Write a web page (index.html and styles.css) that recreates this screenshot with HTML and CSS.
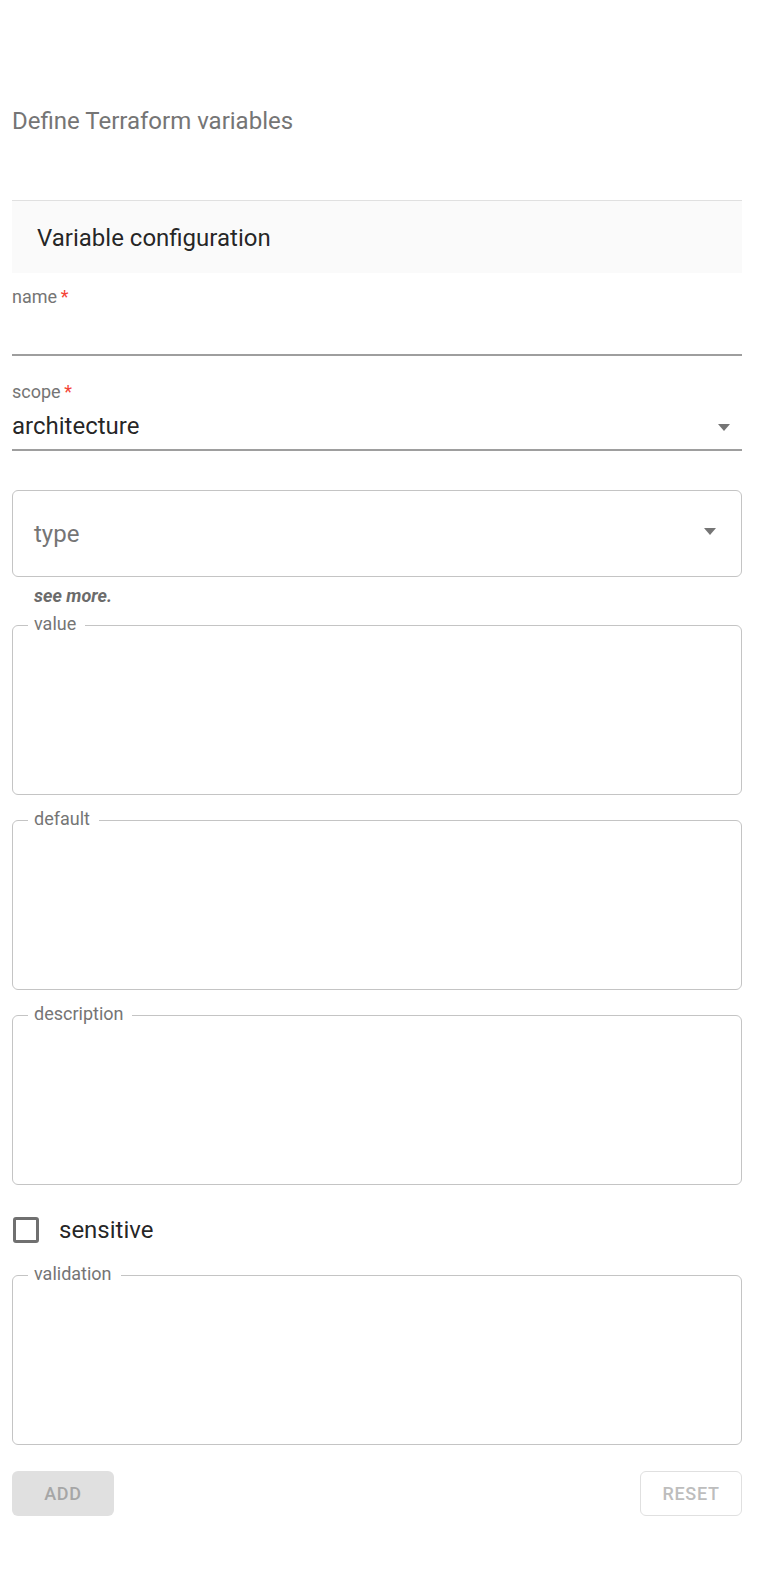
FILE: index.html
```html
<!DOCTYPE html>
<html lang="en">
<head>
<meta charset="utf-8">
<title>Define Terraform variables</title>
<link rel="stylesheet" href="styles.css">
</head>
<body>
<div class="page">
  <h2 class="title">Define Terraform variables</h2>
  <div class="section-head">Variable configuration</div>

  <div class="field">
    <label class="field-label">name&thinsp;<span class="req">*</span></label>
    <div class="field-input"></div>
  </div>

  <div class="field field-scope">
    <label class="field-label">scope&thinsp;<span class="req">*</span></label>
    <div class="field-input select">
      <span class="value-text">architecture</span>
      <svg class="arrow" width="12" height="7" viewBox="0 0 12 7"><polygon points="0,0 12,0 6,7"/></svg>
    </div>
  </div>

  <div class="outlined-select">
    <span class="placeholder">type</span>
    <svg class="arrow" width="12" height="7" viewBox="0 0 12 7"><polygon points="0,0 12,0 6,7"/></svg>
  </div>
  <div class="helper">see more.</div>

  <fieldset class="area first"><legend>value</legend><div class="area-body"></div></fieldset>
  <fieldset class="area"><legend>default</legend><div class="area-body"></div></fieldset>
  <fieldset class="area"><legend>description</legend><div class="area-body"></div></fieldset>

  <label class="check-row"><span class="check"></span><span class="check-text">sensitive</span></label>

  <fieldset class="area validation"><legend>validation</legend><div class="area-body"></div></fieldset>

  <div class="actions">
    <button class="btn btn-add" type="button">ADD</button>
    <button class="btn btn-reset" type="button">RESET</button>
  </div>
</div>
</body>
</html>
```

FILE: styles.css
```css
* { box-sizing: border-box; }

html, body {
  margin: 0;
  background: #ffffff;
}

body {
  font-family: Roboto, "Liberation Sans", Arial, sans-serif;
  color: rgba(0, 0, 0, 0.87);
}

.page {
  padding: 105px 22px 0 12px;
  min-height: 1584px;
}

.title {
  margin: 0;
  font-size: 24px;
  line-height: 32px;
  font-weight: 400;
  color: #757575;
}

.section-head {
  margin-top: 63px;
  border-top: 1px solid #e0e0e0;
  background: #fafafa;
  padding: 21px 0 19px 25px;
  font-size: 24px;
  line-height: 32px;
  color: rgba(0, 0, 0, 0.87);
}

.field {
  margin-top: 12px;
}

.field-scope {
  margin-top: 24px;
}

.field-label {
  display: block;
  font-size: 18px;
  line-height: 24px;
  color: #757575;
}

.req {
  color: #f44336;
}

.field-input {
  height: 47px;
  border-bottom: 2px solid #9e9e9e;
  padding: 4px 12px 5px 0;
}

.select {
  display: flex;
  align-items: center;
  justify-content: space-between;
}

.value-text {
  font-size: 24px;
  line-height: 36px;
  color: rgba(0, 0, 0, 0.87);
}

.arrow {
  display: block;
  fill: #757575;
  flex: none;
}

.select .arrow {
  margin-top: 2px;
}

.outlined-select {
  margin-top: 39px;
  height: 87px;
  border: 1px solid #c4c4c4;
  border-radius: 6px;
  padding: 0 25px 0 21px;
  display: flex;
  align-items: center;
  justify-content: space-between;
}

.outlined-select .arrow {
  margin-top: -4px;
}

.placeholder {
  font-size: 24px;
  line-height: 36px;
  color: #757575;
}

.helper {
  margin: 7px 0 0 22px;
  font-size: 18px;
  line-height: 24px;
  font-weight: 700;
  font-style: italic;
  color: #6b6b6b;
}

.area {
  margin: 12px 0 0 0;
  padding: 0;
  min-width: 0;
  border: 1px solid #c4c4c4;
  border-radius: 6px;
}

.area.first {
  margin-top: 4px;
}

.area.validation {
  margin-top: 14px;
}

.area legend {
  margin-left: 15px;
  padding: 0 9px 3px 6px;
  font-size: 18px;
  line-height: 24px;
  color: #757575;
}

.area-body {
  height: 155px;
}

.check-row {
  margin-top: 27px;
  height: 36px;
  display: flex;
  align-items: center;
  gap: 20px;
}

.check {
  margin-left: 1px;
  width: 26px;
  height: 26px;
  border: 3px solid #707070;
  border-radius: 3px;
  flex: none;
}

.check-text {
  font-size: 24px;
  line-height: 36px;
  color: rgba(0, 0, 0, 0.87);
}

.actions {
  margin-top: 26px;
  display: flex;
  justify-content: space-between;
}

.btn {
  width: 102px;
  height: 45px;
  border-radius: 6px;
  font-family: Roboto, "Liberation Sans", Arial, sans-serif;
  font-size: 18px;
  font-weight: 500;
  letter-spacing: 0.7px;
  padding: 0;
  cursor: default;
}

.btn-add {
  background: #e0e0e0;
  border: none;
  color: #a6a6a6;
}

.btn-reset {
  background: #ffffff;
  border: 1px solid #e0e0e0;
  color: #bdbdbd;
}
```
